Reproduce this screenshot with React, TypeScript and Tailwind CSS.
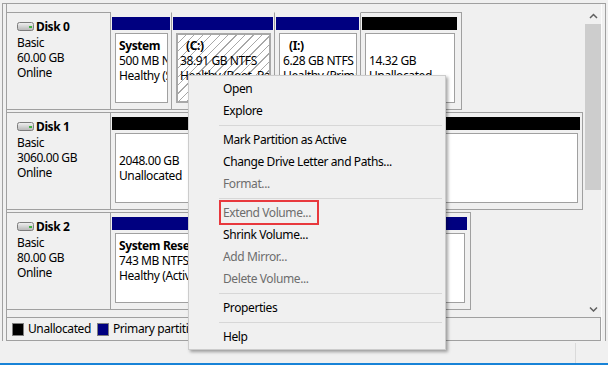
import React from "react";

const font = "font-['Noto_Sans',sans-serif]";

function DiskIcon() {
  return (
    <svg width="17" height="9" viewBox="0 0 17 9" className="shrink-0">
      <defs>
        <linearGradient id="dg" x1="0" y1="0" x2="0" y2="1">
          <stop offset="0" stopColor="#f2f2f2" />
          <stop offset="1" stopColor="#b4b4b4" />
        </linearGradient>
      </defs>
      <rect x="0.5" y="0.5" width="16" height="8" rx="2" fill="url(#dg)" stroke="#7c7c7c" />
      <rect x="12" y="4" width="3" height="2" fill="#3fae3f" />
    </svg>
  );
}

function Chevron({ down }: { down?: boolean }) {
  return (
    <svg width="9" height="6" viewBox="0 0 9 6">
      <path
        d={down ? "M1 1.5 L4.5 5 L8 1.5" : "M1 5 L4.5 1.5 L8 5"}
        fill="none"
        stroke="#606060"
        strokeWidth="1.5"
      />
    </svg>
  );
}

function DiskLabel({ name, size }: { name: string; size: string }) {
  return (
    <div className="w-[104px] shrink-0 border-t border-r border-b border-[#a0a0a0] pl-[10px] pt-[6px] leading-[15px] text-black">
      <div className="flex items-center gap-[2px] mb-[1px]">
        <DiskIcon />
        <span className="font-bold">{name}</span>
      </div>
      <div>Basic</div>
      <div>{size}</div>
      <div>Online</div>
    </div>
  );
}

type PartProps = {
  w: string;
  head: string;
  lines: string[];
  bold?: string;
  hatched?: boolean;
  framed?: boolean;
  pr?: string;
  indent?: boolean;
};

function Partition({ w, head, lines, bold, hatched, framed, pr = "pr-[1px]", indent }: PartProps) {
  return (
    <div
      className={`${w} ${pr} shrink-0 flex flex-col pl-[1px] pt-[4px] pb-[6px] border-r border-b border-[#a0a0a0] ${
        framed ? "border-t" : "border-t border-t-transparent"
      }`}
    >
      <div className={`h-[13px] shrink-0 ${head}`} />
      <div
        className={`mt-[3px] ml-[3px] mr-[2px] flex-1 overflow-hidden whitespace-nowrap leading-[15px] text-black ${
          hatched
            ? "border-[2px] border-[#a8a8a8] bg-[repeating-linear-gradient(135deg,#ffffff_0px,#ffffff_5px,#a8a8a8_5px,#a8a8a8_6px)] pl-[2px] pt-[3px]"
            : "border border-[#a0a0a0] bg-white pl-[3px] pt-[4px]"
        }`}
      >
        <div className={`h-[15px] font-bold ${indent ? "pl-[6px]" : ""}`}>{bold ?? ""}</div>
        {lines.map((l) => (
          <div key={l}>{l}</div>
        ))}
      </div>
    </div>
  );
}

const menu: (string | { t: string; off?: boolean })[] = [
  { t: "Open" },
  { t: "Explore" },
  "-",
  { t: "Mark Partition as Active" },
  { t: "Change Drive Letter and Paths..." },
  { t: "Format...", off: true },
  "-",
  { t: "Extend Volume...", off: true },
  { t: "Shrink Volume..." },
  { t: "Add Mirror...", off: true },
  { t: "Delete Volume...", off: true },
  "-",
  { t: "Properties" },
  "-",
  { t: "Help" },
];

export default function App() {
  return (
    <div
      className={`w-[608px] h-[365px] bg-[#f0f0f0] flex flex-col relative overflow-hidden text-[12px] tracking-[-0.4px] ${font}`}
    >
      <div className="h-[3px] shrink-0" />

      {/* frame around disks + legend */}
      <div className="h-[338px] w-[604px] ml-[2px] shrink-0 border-t border-l border-r border-[#a0a0a0] flex">
        <div className="ml-[3px] w-[596px] border-l border-[#a0a0a0] border-r border-r-[#fbfbfb] flex flex-col">
          <div className="h-[313px] flex">
            {/* disk rows */}
            <div className="w-[577px] shrink-0 pt-[8px] flex flex-col gap-[2px] overflow-hidden">
              <div className="flex h-[98px]">
                <DiskLabel name="Disk 0" size="60.00 GB" />
                <Partition w="w-[61px]" head="bg-[#000080]" bold="System" lines={["500 MB NTFS", "Healthy (System, Active)"]} />
                <Partition
                  w="w-[103px]"
                  head="bg-[#000080]"
                  bold="(C:)"
                  indent
                  hatched
                  lines={["38.91 GB NTFS", "Healthy (Boot, Page File)"]}
                />
                <Partition w="w-[86px]" head="bg-[#000080]" bold="(I:)" indent lines={["6.28 GB NTFS", "Healthy (Primary Partition)"]} />
                <Partition w="w-[101px]" head="bg-black" framed pr="pr-[4px]" lines={["14.32 GB", "Unallocated"]} />
              </div>

              <div className="flex h-[98px]">
                <DiskLabel name="Disk 1" size="3060.00 GB" />
                <Partition w="w-[472px]" head="bg-black" framed pr="pr-[2px]" lines={["2048.00 GB", "Unallocated"]} />
              </div>

              <div className="flex h-[98px]">
                <DiskLabel name="Disk 2" size="80.00 GB" />
                <Partition
                  w="w-[360px]"
                  head="bg-[#000080]"
                  framed
                  pr="pr-[3px]"
                  bold="System Reserved"
                  lines={["743 MB NTFS", "Healthy (Active, Primary Partition, Crash Dump, System, Start"]}
                />
              </div>
            </div>

            {/* scrollbar */}
            <div className="w-[17px] shrink-0 flex flex-col pt-[4px] pl-[1px]">
              <div className="h-[16px] flex items-center justify-center">
                <Chevron />
              </div>
              <div className="h-[166px] w-full bg-[#cdcdcd]" />
              <div className="flex-1" />
              <div className="h-[16px] flex items-center justify-center">
                <Chevron down />
              </div>
            </div>
          </div>

          {/* legend */}
          <div className="h-[24px] border-t border-r border-b border-[#a0a0a0] flex items-center pl-[5px] text-black">
            <span className="w-[12px] h-[13px] bg-black border border-[#808080]" />
            <span className="ml-[4px]">Unallocated</span>
            <span className="ml-[6px] w-[12px] h-[13px] bg-[#000080] border border-[#808080]" />
            <span className="ml-[4px]">Primary partition</span>
          </div>
        </div>
      </div>

      {/* status bar */}
      <div className="h-[22px] shrink-0 flex">
        <div className="w-[575px]" />
        <div className="mt-[2px] border-l border-[#dadada]" />
      </div>
      <div className="h-[2px] shrink-0 bg-[#1883d7]" />

      {/* context menu */}
      <div className="absolute left-[188px] top-[75px] w-[258px] bg-[#f0f0f0] border border-[#cccccc] pt-[2px] pb-[1px] shadow-[2px_2px_3px_rgba(0,0,0,0.35)]">
        {menu.map((m, i) =>
          m === "-" ? (
            <div key={i} className="h-[7px] flex items-center">
              <div className="ml-[30px] mr-[3px] flex-1 h-px bg-[#d7d7d7]" />
            </div>
          ) : (
            <div
              key={i}
              className={`h-[22px] flex items-center pl-[34px] ${typeof m !== "string" && m.off ? "text-[#6d6d6d]" : "text-black"}`}
            >
              {typeof m !== "string" && m.t}
            </div>
          )
        )}
        <div className="absolute left-[30px] top-[124px] w-[100px] h-[25px] border-2 border-[#e8383d]" />
      </div>
    </div>
  );
}
